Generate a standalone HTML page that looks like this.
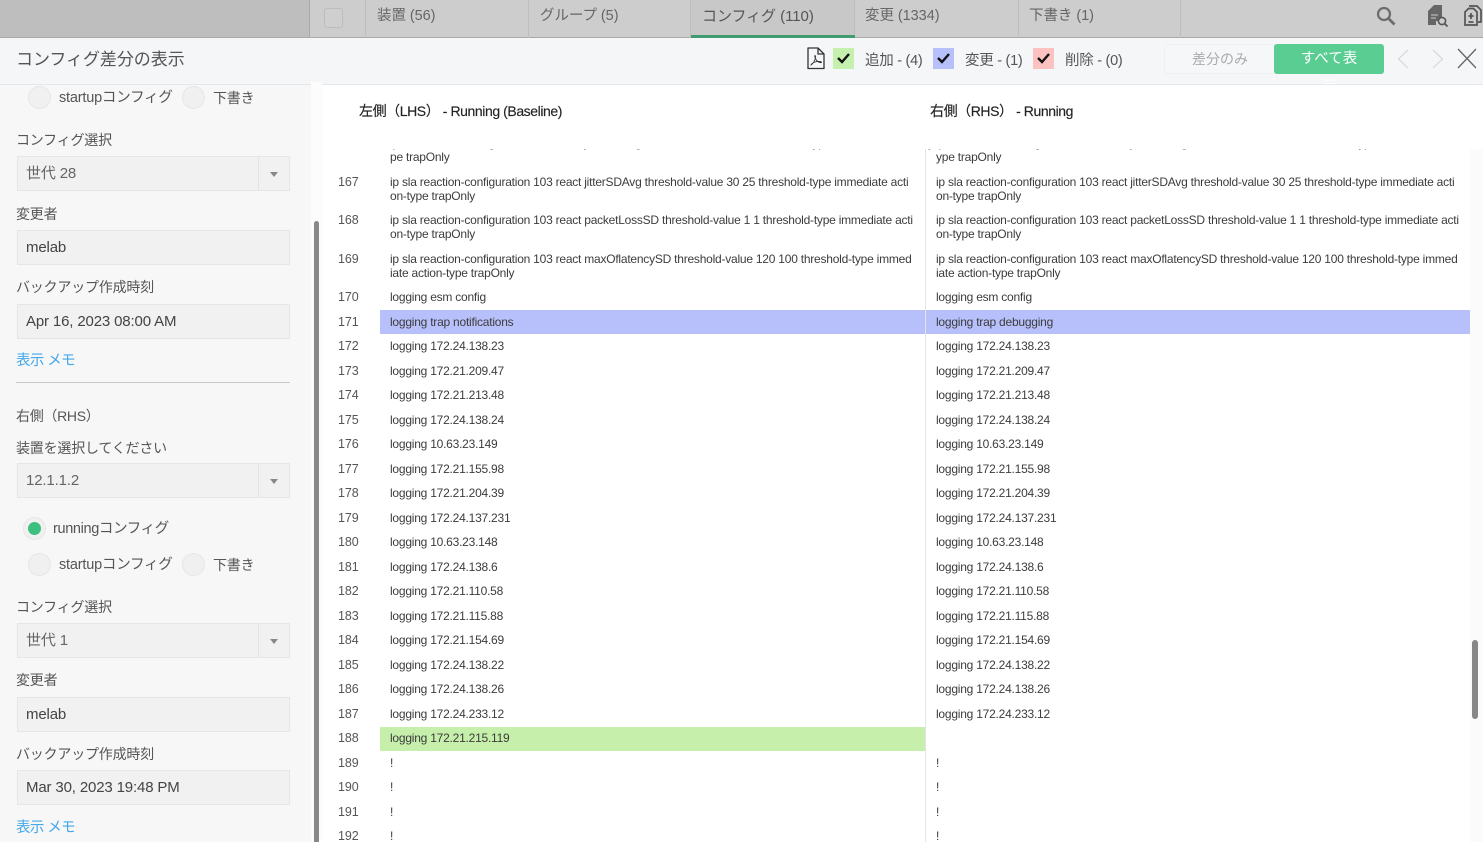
<!DOCTYPE html>
<html lang="ja"><head><meta charset="utf-8"><title>コンフィグ差分の表示</title>
<style>
html,body{margin:0;padding:0;width:1483px;height:842px;overflow:hidden;background:#fff}
body{font-family:"Liberation Sans","Noto Sans CJK JP",sans-serif;color:#444;position:relative}
div,span,a{position:absolute;white-space:nowrap;box-sizing:border-box}
svg{position:absolute;overflow:visible}
.tab{top:0;height:38px;border-right:1px solid #bdbdbd;font-size:14.5px;line-height:33px;padding-left:11px;color:#666;letter-spacing:-.05px}
.lb{left:16px;font-size:14px;line-height:18px;color:#555;letter-spacing:-.2px}
.st{font-size:14.5px;letter-spacing:-.2px}
.f{left:17px;width:273px;height:35px;background:#f1f1f1;border:1px solid #e6e6e6;font-size:15px;line-height:33px;padding-left:8px;color:#444;letter-spacing:-.15px}
.s{color:#666}
.s i{position:absolute;left:240px;top:0;height:33px;width:1px;background:#e3e3e3}
.s b{position:absolute;left:252px;top:15px;border:4px solid transparent;border-top:5px solid #888;border-bottom:0}
.rd{width:23px;height:23px;border-radius:50%;background:#f0f0f0;border:1px solid #e6e6e6}
.lk{left:16px;font-size:14.5px;line-height:18px;color:#45a8ea;letter-spacing:-.6px}
.cb{top:48px;width:21px;height:21px}
.cl{top:52px;font-size:14.5px;line-height:19px;color:#555;letter-spacing:-.27px}
.hd{top:102px;font-size:14px;line-height:18px;color:#222;letter-spacing:-.42px;-webkit-text-stroke:.15px #222}
#rows div{font-size:12px;line-height:14px;color:#3c3c3c;letter-spacing:-.23px}
#rows .n{left:16px;font-size:12.5px;letter-spacing:-.1px;color:#555}
#rows .l{left:68px}
#rows .r{left:614px}
</style></head><body>

<div style="left:0;top:0;width:1483px;height:38px;background:#cdcdcd;border-bottom:1px solid #a9a9a9"></div>
<div style="left:0;top:0;width:310px;height:38px;background:#bebebe;border-right:1px solid #a9a9a9;border-bottom:1px solid #a9a9a9"></div>
<div style="left:310px;top:0;width:56px;height:38px;border-right:1px solid #bdbdbd"></div>
<div style="left:324px;top:8px;width:19px;height:20px;border:1px solid #bcbcbc;border-radius:3px;background:#cfcfcf"></div>
<div class="tab" style="left:366px;width:163px">装置 (56)</div>
<div class="tab" style="left:529px;width:162px">グループ (5)</div>
<div class="tab" style="left:691px;width:164px;background:#c8c8c8;color:#555;font-size:15px">コンフィグ (110)</div>
<div style="left:691px;top:35px;width:164px;height:3px;background:#3f9b70"></div>
<div class="tab" style="left:855px;width:164px;padding-left:10px">変更 (1334)</div>
<div class="tab" style="left:1019px;width:162px;padding-left:10px">下書き (1)</div>
<svg style="left:1376px;top:6px" width="20" height="20" viewBox="0 0 20 20" fill="none" stroke="#6e6e6e" stroke-width="2.3"><circle cx="8" cy="8" r="6"/><path d="M12.5 12.5L18.5 18.5" stroke-width="2.8"/></svg>
<svg style="left:1427px;top:4px" width="22" height="24" viewBox="0 0 22 24"><path d="M7 1H15V17H9V21H1V7Z" fill="#666"/><path d="M4 11H11M4 14H9" stroke="#ccc"/><circle cx="15" cy="17" r="3.6" fill="#cdcdcd" stroke="#555" stroke-width="1.6"/><path d="M17.5 19.5L20.5 22.5" stroke="#555" stroke-width="1.8"/></svg>
<svg style="left:1464px;top:4px" width="19" height="24" viewBox="0 0 19 24" fill="none" stroke="#555" stroke-width="1.7"><path d="M1 8V21H13V8L9.500 4.500H4.500Z"/><path d="M5 2H13L17 6V18H14"/><path d="M7 9V15M4.500 12H9.500M4.500 18H9.500"/></svg>

<div style="left:0;top:38px;width:1483px;height:47px;background:#f5f6f8;border-bottom:1px solid #e6e7e9"></div>
<div style="left:16px;top:49px;font-size:17px;line-height:22px;color:#555;letter-spacing:-.05px">コンフィグ差分の表示</div>

<svg style="left:806px;top:47px" width="20" height="23" viewBox="0 0 20 23" fill="none" stroke="#333" stroke-width="1.3"><path d="M2 1H12L18 7V21.5H2Z M12 1V7H18" stroke-linejoin="round"/><path d="M5 18C8 16 10 11 9.4 9C9 7.5 8 9.5 10 12.5C11.500 15 14 16 15.500 15.500C16 14.500 12 14 9 15C6.500 16 5 17 5 18Z" stroke-width=".9"/></svg>

<div class="cb" style="left:833px;background:#c5f0ae"></div>
<div class="cb" style="left:933px;background:#b8c0fb"></div>
<div class="cb" style="left:1033px;background:#fcc2c2"></div>
<svg style="left:833px;top:47px" width="221" height="21" fill="none" stroke="#111" stroke-width="2.4"><path d="M5 11L9 15L16 7"/><path d="M105 11L109 15L116 7"/><path d="M205 11L209 15L216 7"/></svg>
<div class="cl" style="left:865px">追加 - (4)</div>
<div class="cl" style="left:965px">変更 - (1)</div>
<div class="cl" style="left:1065px">削除 - (0)</div>

<div style="left:1164px;top:44px;width:112px;height:30px;background:#f6f7f8;border:1px solid #eff0f1;border-radius:4px 0 0 4px;font-size:14px;line-height:28px;color:#aaa;padding-left:27px">差分のみ</div>
<div style="left:1274px;top:44px;width:110px;height:30px;background:#5acd93;border-radius:3px;font-size:14.5px;line-height:31px;color:#fff;text-align:center">すべて表</div>
<div style="left:1322px;top:78px;height:6px;overflow:hidden;font-size:14.5px;line-height:18px;color:#fff">示</div>
<svg style="left:1396px;top:48px" width="84" height="22" fill="none"><path d="M12 2L2.500 11L12 20M37 2L46.500 11L37 20" stroke="#d6d6d6" stroke-width="1.2"/><path d="M62 1L80 20M80 1L62 20" stroke="#666" stroke-width="1.300"/></svg>

<div style="left:0;top:85px;width:311px;height:757px;background:#f7f7f7"></div>
<div style="left:311px;top:82px;width:11px;height:760px;background:#fcfcfc"></div>
<div style="left:314px;top:221px;width:5px;height:621px;background:#888;border-radius:3px 3px 0 0"></div>

<div class="rd" style="left:28px;top:86px"></div>
<div class="lb st" style="left:59px;top:89px">startupコンフィグ</div>
<div class="rd" style="left:182px;top:86px"></div>
<div class="lb" style="left:213px;top:89px">下書き</div>

<div class="lb" style="top:131px">コンフィグ選択</div>
<div class="f s" style="top:156px">世代 28<i></i><b></b></div>
<div class="lb" style="top:205px">変更者</div>
<div class="f" style="top:230px">melab</div>
<div class="lb" style="top:278px">バックアップ作成時刻</div>
<div class="f" style="top:304px">Apr 16, 2023 08:00 AM</div>
<div class="lk" style="top:352px">表示 メモ</div>
<div style="left:16px;top:382px;width:274px;height:1px;background:#c9c9c9"></div>

<div class="lb" style="top:407px;letter-spacing:-.3px">右側（RHS）</div>
<div class="lb" style="top:439px">装置を選択してください</div>
<div class="f s" style="top:463px">12.1.1.2<i></i><b></b></div>
<div class="rd" style="left:23px;top:517px"></div>
<div style="left:28px;top:522px;width:13px;height:13px;border-radius:50%;background:#3dbf7f"></div>
<div class="lb st" style="left:53px;top:520px;letter-spacing:-.35px">runningコンフィグ</div>
<div class="rd" style="left:28px;top:553px"></div>
<div class="lb st" style="left:59px;top:556px">startupコンフィグ</div>
<div class="rd" style="left:182px;top:553px"></div>
<div class="lb" style="left:213px;top:556px">下書き</div>
<div class="lb" style="top:598px">コンフィグ選択</div>
<div class="f s" style="top:623px">世代 1<i></i><b></b></div>
<div class="lb" style="top:671px">変更者</div>
<div class="f" style="top:697px">melab</div>
<div class="lb" style="top:745px">バックアップ作成時刻</div>
<div class="f" style="top:770px">Mar 30, 2023 19:48 PM</div>
<div class="lk" style="top:819px">表示 メモ</div>

<div class="hd" style="left:359px">左側（LHS） - Running (Baseline)</div>
<div class="hd" style="left:930px">右側（RHS） - Running</div>

<div id="rows" style="left:322px;top:149px;width:1148px;height:693px;overflow:hidden;background:#fff">
<div style="left:58px;top:161px;width:545px;height:24px;background:#b8c0fb"></div>
<div style="left:604px;top:161px;width:544px;height:24px;background:#b8c0fb"></div>
<div style="left:58px;top:578px;width:545px;height:24px;background:#c6efac"></div>
<div style="left:603px;top:0;width:1px;height:693px;background:#e4e4e4"></div>

<div class="l" style="top:-13px">ip sla reaction-configuration 103 react jitterDSAvg threshold-value 30 25 threshold-type immediate action-ty</div>
<div class="l" style="top:1px">pe trapOnly</div>
<div class="r" style="top:-13px">ip sla reaction-configuration 103 react jitterDSAvg threshold-value 30 25 threshold-type immediate action-t</div>
<div class="r" style="top:1px">ype trapOnly</div>

<div class="n" style="top:26px">167</div>
<div class="l" style="top:26px">ip sla reaction-configuration 103 react jitterSDAvg threshold-value 30 25 threshold-type immediate acti<br>on-type trapOnly</div>
<div class="r" style="top:26px">ip sla reaction-configuration 103 react jitterSDAvg threshold-value 30 25 threshold-type immediate acti<br>on-type trapOnly</div>
<div class="n" style="top:64px">168</div>
<div class="l" style="top:64px">ip sla reaction-configuration 103 react packetLossSD threshold-value 1 1 threshold-type immediate acti<br>on-type trapOnly</div>
<div class="r" style="top:64px">ip sla reaction-configuration 103 react packetLossSD threshold-value 1 1 threshold-type immediate acti<br>on-type trapOnly</div>
<div class="n" style="top:103px">169</div>
<div class="l" style="top:103px">ip sla reaction-configuration 103 react maxOflatencySD threshold-value 120 100 threshold-type immed<br>iate action-type trapOnly</div>
<div class="r" style="top:103px">ip sla reaction-configuration 103 react maxOflatencySD threshold-value 120 100 threshold-type immed<br>iate action-type trapOnly</div>
<div class="n" style="top:141px">170</div><div class="l" style="top:141px">logging esm config</div><div class="r" style="top:141px">logging esm config</div>
<div class="n" style="top:166px">171</div><div class="l" style="top:166px">logging trap notifications</div><div class="r" style="top:166px">logging trap debugging</div>
<div class="n" style="top:190px">172</div><div class="l" style="top:190px">logging 172.24.138.23</div><div class="r" style="top:190px">logging 172.24.138.23</div>
<div class="n" style="top:215px">173</div><div class="l" style="top:215px">logging 172.21.209.47</div><div class="r" style="top:215px">logging 172.21.209.47</div>
<div class="n" style="top:239px">174</div><div class="l" style="top:239px">logging 172.21.213.48</div><div class="r" style="top:239px">logging 172.21.213.48</div>
<div class="n" style="top:264px">175</div><div class="l" style="top:264px">logging 172.24.138.24</div><div class="r" style="top:264px">logging 172.24.138.24</div>
<div class="n" style="top:288px">176</div><div class="l" style="top:288px">logging 10.63.23.149</div><div class="r" style="top:288px">logging 10.63.23.149</div>
<div class="n" style="top:313px">177</div><div class="l" style="top:313px">logging 172.21.155.98</div><div class="r" style="top:313px">logging 172.21.155.98</div>
<div class="n" style="top:337px">178</div><div class="l" style="top:337px">logging 172.21.204.39</div><div class="r" style="top:337px">logging 172.21.204.39</div>
<div class="n" style="top:362px">179</div><div class="l" style="top:362px">logging 172.24.137.231</div><div class="r" style="top:362px">logging 172.24.137.231</div>
<div class="n" style="top:386px">180</div><div class="l" style="top:386px">logging 10.63.23.148</div><div class="r" style="top:386px">logging 10.63.23.148</div>
<div class="n" style="top:411px">181</div><div class="l" style="top:411px">logging 172.24.138.6</div><div class="r" style="top:411px">logging 172.24.138.6</div>
<div class="n" style="top:435px">182</div><div class="l" style="top:435px">logging 172.21.110.58</div><div class="r" style="top:435px">logging 172.21.110.58</div>
<div class="n" style="top:460px">183</div><div class="l" style="top:460px">logging 172.21.115.88</div><div class="r" style="top:460px">logging 172.21.115.88</div>
<div class="n" style="top:484px">184</div><div class="l" style="top:484px">logging 172.21.154.69</div><div class="r" style="top:484px">logging 172.21.154.69</div>
<div class="n" style="top:509px">185</div><div class="l" style="top:509px">logging 172.24.138.22</div><div class="r" style="top:509px">logging 172.24.138.22</div>
<div class="n" style="top:533px">186</div><div class="l" style="top:533px">logging 172.24.138.26</div><div class="r" style="top:533px">logging 172.24.138.26</div>
<div class="n" style="top:558px">187</div><div class="l" style="top:558px">logging 172.24.233.12</div><div class="r" style="top:558px">logging 172.24.233.12</div>
<div class="n" style="top:582px">188</div><div class="l" style="top:582px">logging 172.21.215.119</div>
<div class="n" style="top:607px">189</div><div class="l" style="top:607px">!</div><div class="r" style="top:607px">!</div>
<div class="n" style="top:631px">190</div><div class="l" style="top:631px">!</div><div class="r" style="top:631px">!</div>
<div class="n" style="top:656px">191</div><div class="l" style="top:656px">!</div><div class="r" style="top:656px">!</div>
<div class="n" style="top:680px">192</div><div class="l" style="top:680px">!</div><div class="r" style="top:680px">!</div>
</div>

<div style="left:1470px;top:149px;width:13px;height:693px;background:#fbfbfb"></div>
<div style="left:1472px;top:640px;width:6px;height:79px;background:#888;border-radius:3px"></div>

</body></html>
